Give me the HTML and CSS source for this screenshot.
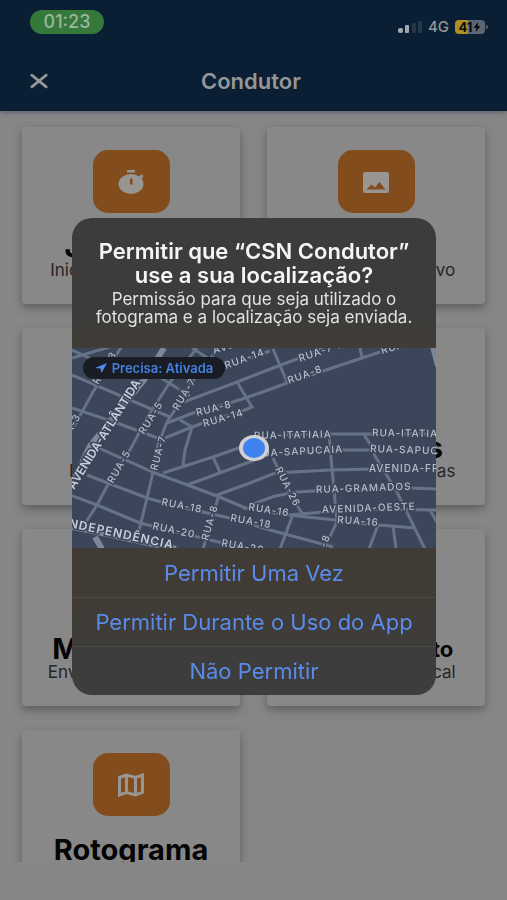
FILE: index.html
```html
<!DOCTYPE html>
<html lang="pt-BR">
<head>
<meta charset="utf-8">
<meta name="viewport" content="width=device-width, initial-scale=1">
<title>Condutor</title>
<link rel="stylesheet" href="styles.css">
</head>
<body>
<div class="app">
  <header class="topbar">
    <div class="status">
      <span class="clock">01:23</span>
      <div class="status-right">
        <svg class="signal" viewBox="0 0 24 14" aria-hidden="true">
          <rect x="0" y="8" width="5" height="5" rx="2"/>
          <rect x="7" y="5" width="4" height="8" rx="1"/>
          <rect class="off" x="14" y="3" width="4" height="10" rx="1"/>
          <rect class="off" x="20" y="1" width="4" height="12" rx="1"/>
        </svg>
        <span class="network">4G</span>
        <span class="battery"><span class="battery-level">41</span><svg viewBox="0 0 8 12" aria-hidden="true"><path d="M5.500 0 0 7h3.500L2.500 12 8 5H4.500z"/></svg></span>
      </div>
    </div>
    <div class="navbar">
      <button class="close" type="button" aria-label="Fechar">
        <svg viewBox="0 0 20 16" aria-hidden="true"><path d="M2 1.500 18 14.500M18 1.500 2 14.500"/></svg>
      </button>
      <h1>Condutor</h1>
    </div>
  </header>

  <main class="cards">
    <a class="card" href="#">
      <span class="tile"><svg viewBox="0 0 26 24" aria-hidden="true"><path d="M9 0h8v2.500H9z"/><ellipse cx="13" cy="14" rx="12.500" ry="10"/><path d="m21 7 2.500-3 2 2-2 3z"/><path class="cut" d="M12 8.500h2.500v6H12z"/></svg></span>
      <strong>Jornadas</strong><span class="desc">Iniciar a sua jornada</span>
    </a>
    <a class="card" href="#">
      <span class="tile"><svg viewBox="0 0 26 24" aria-hidden="true"><rect y="2" width="26" height="21" rx="2.500"/><path class="cut" d="m3.500 19.500 5-5 3.500 3L16.500 12l6 7.500z"/></svg></span>
      <strong>Fotos</strong><span class="desc">Enviar novo arquivo</span>
    </a>
    <a class="card" href="#">
      <span class="tile"></span>
      <strong>Rotas</strong><span class="desc">Iniciar uma rota</span>
    </a>
    <a class="card" href="#">
      <span class="tile"></span>
      <strong>Registros</strong><span class="desc">Ver as advertências</span>
    </a>
    <a class="card" href="#">
      <span class="tile"></span>
      <strong>Mensagem</strong><span class="desc">Envio de mensagens</span>
    </a>
    <a class="card" href="#">
      <span class="tile"></span>
      <strong class="small">Carregamento</strong><span class="desc">Informar o seu local</span>
    </a>
    <a class="card" href="#">
      <span class="tile"><svg viewBox="0 0 26 24" aria-hidden="true"><path class="line" d="m1.500 4.500 7-2.500 9 2.500 7-2.500v17.500l-7 2.500-9-2.500-7 2.500zM8.500 2v17.500M17.500 4.500V22"/></svg></span>
      <strong>Rotograma</strong>
    </a>
  </main>
</div>

<div class="overlay">
  <section class="dialog" role="dialog" aria-labelledby="dialog-title">
    <div class="message">
      <h2 id="dialog-title">Permitir que “CSN Condutor” use a sua localização?</h2>
      <p>Permissão para que seja utilizado o fotograma e a localização seja enviada.</p>
    </div>
    <div class="map">
      <svg class="streets" viewBox="0 0 364 200" preserveAspectRatio="xMidYMid slice">
        <g class="avenue">
          <path d="M92 0 72 32 18 98-4 144M-4 178 30 185 104 201M23 189l7 12M361-2l5 20"/>
        </g>
        <g class="road">
          <path d="M0 27 98 69M0 60l45 15 46 17M50-2 21 44 0 82M125 0 98 34 75 70 58 102 41 127 25 157 12 177"/>
          <path d="M142 6 116 39 108 54 95 74 86 97 81 124 75 150 66 187M0 10 48-4M60 12l58 36M120 0l28 18M0 2l26 12"/>
          <path d="m101 58 64-24 36-14 40-15 12-7M95 75l26-10 37-10 30-10 27-10 33-11 60-20M93 90l27-11 11-4 37-11 12-5-15-25"/>
          <path d="m108 72 12 7-7 23-2 15M20 97l63 28 62 23 31 13M91 125l50-16 40-14M115 137l68-25M141 109l7 15M145 147l33-12 25-10 55-3 45-1"/>
          <path d="m146 150-15 51M15 127l60 23 33 9 50 11 40 12 63 17M-2 147l27 10 43 18 33 8 50 12 30 6"/>
          <path d="M257 85l1 14 2 21 5 54-13 27M198 87l62-1h105M190 106l80-4h95M291 85l9 14 3 9 22 36 28 57M201 110l16 34 14 23"/>
          <path d="m178 157 25-9 22-4 66-4h47l28 1M216 167l37-3 45-3 68 1M171 160l45 7 47 5 22 3 21 2 37 3M220 169l-12 32M306 177l-9 24M321 177l3 24M358 162l8 14"/>
          <path d="m201 1 14 33M288 0l2 9M178 10l20-7"/>
        </g>
        <g class="labels">
          <text transform="translate(142 6) rotate(-18)">AVENIDA</text>
          <text transform="translate(154 21) rotate(-20)">RUA-14</text>
          <text transform="translate(228 14) rotate(-19)">RUA-7-A</text>
          <text transform="translate(310 6) rotate(-16)">RUA-8</text>
          <text transform="translate(217 36) rotate(-20)">RUA-8</text>
          <text transform="translate(125 68) rotate(-14)">RUA-8</text>
          <text transform="translate(132 79) rotate(-16)">RUA-14</text>
          <text transform="translate(106 63) rotate(-59)">RUA-7</text>
          <text transform="translate(72 87) rotate(-58)">RUA-5</text>
          <text transform="translate(-8 100) rotate(-62)">RUA-3</text>
          <text transform="translate(26 37) rotate(-58)">RUA-3</text>
          <text transform="translate(85 123) rotate(-75)">RUA-7</text>
          <text transform="translate(41 136) rotate(-60)">RUA-5</text>
          <text transform="translate(89 157) rotate(11)">RUA-18</text>
          <text transform="translate(80 181) rotate(12)">RUA-20</text>
          <text transform="translate(158 173) rotate(10)">RUA-18</text>
          <text transform="translate(149 198) rotate(10)">RUA-20</text>
          <text transform="translate(136 193) rotate(-74)">RUA-8</text>
          <text transform="translate(176 162) rotate(9)">RUA-16</text>
          <text transform="translate(203 121) rotate(63)">RUA-26</text>
          <text transform="translate(246 222) rotate(-70)">RUA-8</text>
          <text transform="translate(182 91) rotate(-1)">RUA-ITATIAIA</text>
          <text transform="translate(300 88) rotate(1)">RUA-ITATIAIA</text>
          <text transform="translate(183 109) rotate(-3)">RUA-SAPUCAIA</text>
          <text transform="translate(298 104) rotate(2)">RUA-SAPUCAIA</text>
          <text transform="translate(297 124)">AVENIDA-FRANÇA</text>
          <text transform="translate(244 145) rotate(-2)">RUA-GRAMADOS</text>
          <text transform="translate(250 165) rotate(-2)">AVENIDA-OESTE</text>
          <text transform="translate(265 175) rotate(4)">RUA-16</text>
        </g>
        <g class="labels major">
          <text class="long" transform="translate(2 142) rotate(-58)">AVENIDA-ATLÂNTIDA</text>
          <text transform="translate(-8 178) rotate(12)">INDEPENDÊNCIA</text>
        </g>
        <ellipse class="puck-ring" cx="182" cy="100" rx="15" ry="13"/>
        <ellipse class="puck" cx="182" cy="100" rx="11" ry="10"/>
      </svg>
      <button class="precise" type="button"><svg viewBox="0 0 12 10" aria-hidden="true"><path d="M12 0 0 5l5.500.500L6.500 10z"/></svg>Precisa: Ativada</button>
    </div>
    <div class="actions">
      <button type="button">Permitir Uma Vez</button>
      <button type="button">Permitir Durante o Uso do App</button>
      <button type="button">Não Permitir</button>
    </div>
  </section>
</div>
</body>
</html>
```
FILE: styles.css
```css
* { box-sizing: border-box; }

body {
  margin: 0;
  background: #868686;
  font-family: Inter, "Liberation Sans", sans-serif;
}

button { border: 0; padding: 0; background: none; font: inherit; cursor: pointer; }

.app {
  display: flex;
  flex-direction: column;
  height: 100vh;
  padding-bottom: 38px;
}

.topbar {
  position: relative;
  flex: none;
  padding: 10px 22px 14px 30px;
  background: #0a1f33;
  color: #949698;
  box-shadow: 0 1px 5px #4e5a68;
}

.status { display: flex; justify-content: space-between; align-items: flex-start; }
.clock {
  width: 74px;
  border-radius: 12px;
  background: #35793a;
  color: #9db59e;
  font-size: 18px;
  font-weight: 500;
  line-height: 24px;
  text-align: center;
}
.status-right { display: flex; align-items: center; gap: 6px; padding-top: 8px; }
.signal { width: 24px; height: 14px; fill: #a3a8ac; }
.signal .off { fill: #243849; }
.network { font-size: 15px; font-weight: 500; line-height: 18px; }
.battery {
  position: relative;
  display: flex;
  align-items: center;
  justify-content: center;
  gap: 1px;
  width: 30px;
  height: 14px;
  border-radius: 4px;
  background: linear-gradient(90deg, #b08f20 42%, #5c6672 42%);
  color: #08090a;
  font-size: 13px;
  font-weight: 700;
}
.battery::after {
  content: "";
  position: absolute;
  top: 5px;
  right: -3px;
  width: 2px;
  height: 4px;
  border-radius: 0 2px 2px 0;
  background: #5c6672;
}
.battery svg { width: 8px; height: 10px; }

.navbar {
  display: grid;
  grid-template-columns: 40px 1fr 40px;
  align-items: center;
  margin-top: 29px;
  padding-right: 13px;
}
.close { width: 18px; height: 32px; }
.close svg { display: block; width: 18px; height: 16px; fill: none; stroke: #949698; stroke-width: 3; stroke-linecap: round; }
.navbar h1 {
  margin: 0;
  font-size: 22px;
  font-weight: 600;
  line-height: 32px;
  text-align: center;
}

.cards {
  display: grid;
  flex: 1;
  grid-template-columns: 1fr 1fr;
  grid-auto-rows: 177px;
  gap: 24px 27px;
  min-height: 0;
  padding: 16px 22px 0;
  overflow: hidden;
}
.card {
  display: flex;
  flex-direction: column;
  align-items: center;
  padding-top: 23px;
  border-radius: 4px;
  background: #888;
  box-shadow: 0 4px 8px #5e5e5e;
  color: #050505;
  text-decoration: none;
  white-space: nowrap;
}
.tile {
  display: grid;
  place-items: center;
  width: 77px;
  height: 63px;
  border-radius: 15px;
  background: #824c1c;
}
.tile svg { width: 26px; height: 24px; fill: #989593; }
.tile .cut { fill: #824c1c; }
.tile .line { fill: none; stroke: #989593; stroke-width: 3; }
.card strong {
  margin-top: 20px;
  font-size: 29px;
  font-weight: 700;
  line-height: 28px;
}
.card .small { font-size: 22px; }
.desc { color: #252525; font-size: 17px; line-height: 18px; }

.overlay {
  position: fixed;
  inset: 0;
  display: grid;
  align-items: center;
  padding: 13px 71px 0 72px;
}
.dialog {
  overflow: hidden;
  border-radius: 20px;
  background: linear-gradient(#3c3c3c 18%, #403c37 27%, #403b35 80%, #3d3d3d 94%);
  color: #f5f5f5;
  text-align: center;
}
.message { padding: 21px 16px 22px; }
.message h2 { margin: 0; font-size: 22px; font-weight: 600; line-height: 24px; }
.message p { margin: 3px 0 0; color: #e2e2e2; font-size: 17px; line-height: 18px; }

.map { position: relative; background: #3b465a; }
.streets { display: block; width: 100%; height: 200px; }
.avenue { fill: none; stroke: #7c8799; stroke-width: 6; }
.road { fill: none; stroke: #667286; stroke-width: 3; }
.labels {
  fill: #b6bdc9;
  stroke: #3b465a;
  stroke-width: 3;
  paint-order: stroke;
  font-size: 10px;
  font-weight: 500;
  letter-spacing: 1px;
}
.major { fill: #c8ced8; font-size: 12px; font-weight: 600; }
.major .long { font-size: 12px; letter-spacing: 0; }
.puck-ring { fill: #cfd1d4; }
.puck { fill: #3f83f0; }
.precise {
  position: absolute;
  top: 9px;
  left: 11px;
  display: flex;
  align-items: center;
  justify-content: center;
  gap: 5px;
  width: 142px;
  height: 22px;
  border-radius: 11px;
  background: #191c22;
  color: #4380e0;
  font-size: 13px;
  font-weight: 600;
}
.precise svg { width: 12px; height: 10px; fill: #4f8df0; }

.actions { display: flex; flex-direction: column; }
.actions button {
  height: 49px;
  border-top: 1px solid #4c4a47;
  color: #5b8bea;
  font-size: 22px;
}
.actions button:first-child { border-top-color: transparent; }
```
